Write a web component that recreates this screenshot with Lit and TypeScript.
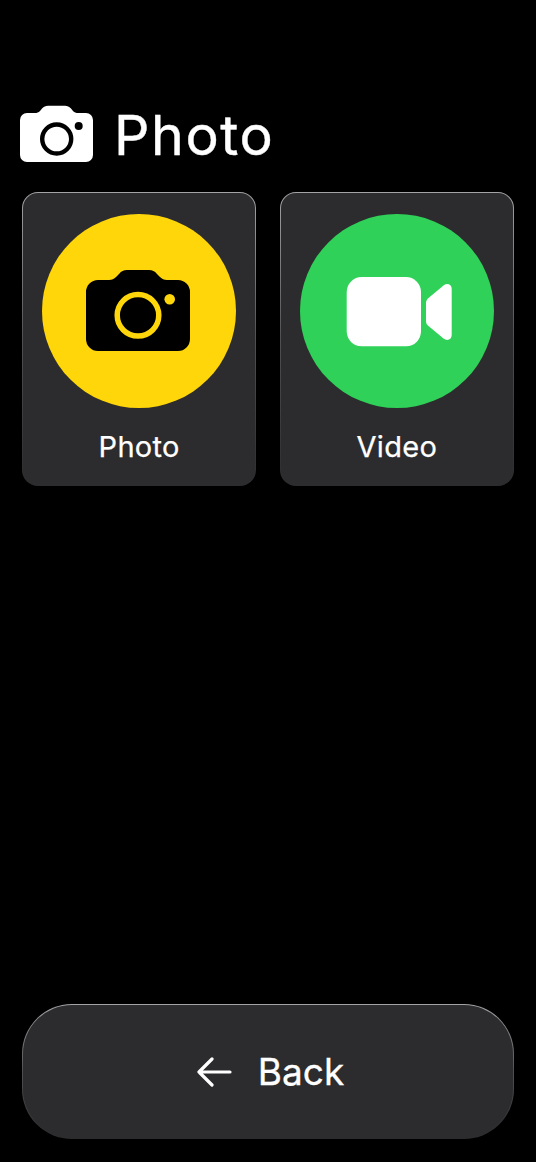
import { LitElement, html, css } from "lit";
import { customElement } from "lit/decorators.js";

@customElement("app-root")
export class AppRoot extends LitElement {
  static styles = css`
    :host {
      display: block;
      width: 536px;
      height: 1162px;
      background: #000;
      color: #fff;
      font-family: Inter, "Liberation Sans", sans-serif;
    }
    .page {
      box-sizing: border-box;
      height: 100%;
      display: flex;
      flex-direction: column;
      padding: 105px 22.33px 22.67px;
    }
    .header {
      display: flex;
      align-items: center;
      height: 58px;
      gap: 20px;
      margin: 0 0 29px -2.33px;
    }
    .header svg {
      display: block;
      flex: none;
    }
    .title {
      font-size: 55.5px;
      line-height: 58px;
      font-weight: 400;
      letter-spacing: 1.6px;
      -webkit-text-stroke: 0.4px #fff;
      margin: 2px 0 0;
    }
    .grid {
      display: grid;
      grid-template-columns: 1fr 1fr;
      gap: 24px;
    }
    .card,
    .back {
      box-sizing: border-box;
      border: 1.5px solid transparent;
      background:
        linear-gradient(#2c2c2e, #2c2c2e) padding-box,
        linear-gradient(#a4a4a6, #505052 50%, #2c2c2e 100%) border-box;
    }
    .card {
      border-radius: 16px;
      padding: 20.5px 0 21.5px;
      display: flex;
      flex-direction: column;
      align-items: center;
    }
    .circle {
      display: block;
      width: 194px;
      height: 194px;
    }
    .label {
      margin-top: 22px;
      font-size: 29px;
      line-height: 34px;
      font-weight: 400;
      letter-spacing: 0.3px;
      -webkit-text-stroke: 0.25px #fff;
    }
    .back {
      margin-top: auto;
      height: 135.33px;
      border-radius: 50px;
      display: flex;
      align-items: center;
      justify-content: center;
      gap: 26px;
      padding-left: 4px;
      font-size: 37px;
      line-height: 44px;
      font-weight: 400;
      -webkit-text-stroke: 0.3px #fff;
    }
    .back svg {
      display: block;
      flex: none;
    }
  `;

  render() {
    return html`
      <div class="page">
        <div class="header">
          <svg width="74" height="58" viewBox="0 0 74 58">
            <path
              fill="#fff"
              d="M7 8H15C17 8 18.500 7.400 20 6L22 3.500C24 1.500 25.500 0.700 28 0.700H45C47.500 0.700 49 1.500 51 3.500L53 6C54.500 7.400 56 8 58 8H66A7 7 0 0 1 73 15V50A7 7 0 0 1 66 57H7A7 7 0 0 1 0 50V15A7 7 0 0 1 7 8Z"
            />
            <circle cx="36.700" cy="34" r="14.500" fill="none" stroke="#000" stroke-width="4.400" />
            <circle cx="58.700" cy="21" r="4" fill="#000" />
          </svg>
          <h1 class="title">Photo</h1>
        </div>
        <div class="grid">
          <div class="card">
            <svg class="circle" viewBox="0 0 194 194">
              <circle cx="97" cy="97" r="97" fill="#ffd60a" />
              <path
                fill="#000"
                d="M56 66H67C70 66 72 65 74 63L77 60C79.500 57 81.500 56 85 56H107C110.500 56 112.500 57 115 60L118 63C120 65 122 66 125 66H136A12 12 0 0 1 148 78V125A12 12 0 0 1 136 137H56A12 12 0 0 1 44 125V78A12 12 0 0 1 56 66Z"
              />
              <circle cx="96" cy="101.300" r="20.800" fill="none" stroke="#ffd60a" stroke-width="5.500" />
              <circle cx="127.700" cy="85.300" r="5.300" fill="#ffd60a" />
            </svg>
            <div class="label">Photo</div>
          </div>
          <div class="card">
            <svg class="circle" viewBox="0 0 194 194">
              <circle cx="97" cy="97" r="97" fill="#30d158" />
              <rect x="46.700" y="63" width="74.300" height="69.300" rx="15" fill="#fff" />
              <path
                fill="#fff"
                d="M126 89C126 87 126.700 85.500 128.200 84.200L143.500 71.500C147 68.700 151.700 70.200 151.700 75V121C151.700 125.800 147 127.300 143.500 124.500L128.200 111.800C126.700 110.500 126 109 126 107Z"
              />
            </svg>
            <div class="label">Video</div>
          </div>
        </div>
        <div class="back">
          <svg width="36" height="30" viewBox="0 0 36 30">
            <path
              d="M34 15H3M16 2L3 15L16 28"
              fill="none"
              stroke="#fff"
              stroke-width="3.200"
              stroke-linecap="round"
              stroke-linejoin="round"
            />
          </svg>
          <span>Back</span>
        </div>
      </div>
    `;
  }
}
